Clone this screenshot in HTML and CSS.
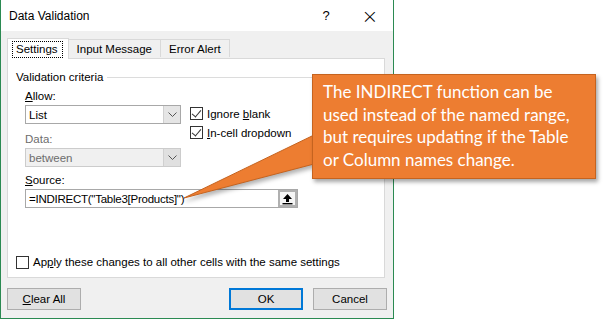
FILE: index.html
```html
<!DOCTYPE html>
<html lang="en">
<head>
    <meta charset="UTF-8">
    <title>Data Validation</title>
    <link rel="stylesheet" href="styles.css">
</head>
<body>
    <!-- Dialog -->
    <div class="dialog">
        <div class="titlebar">
            <span class="title">Data Validation</span>
            <span class="help">?</span>
            <span class="close">&times;</span>
        </div>

        <div class="dialog-body">
            <div class="tabs">
                <div class="tab active"><span class="focus">Settings</span></div>
                <div class="tab">Input Message</div>
                <div class="tab">Error Alert</div>
            </div>

            <div class="panel">
                <div class="group-title">
                    <span>Validation criteria</span>
                    <span class="group-line"></span>
                </div>

                <div class="criteria">
                    <div class="criteria-left">
                        <div class="label"><u>A</u>llow:</div>
                        <div class="select">
                            <span class="select-value">List</span>
                            <span class="select-btn"><svg width="9" height="6" viewBox="0 0 9 6"><path d="M0.5 0.5 L4.5 4.5 L8.5 0.5" fill="none" stroke="#555" stroke-width="1"/></svg></span>
                        </div>
                        <div class="label disabled">Data:</div>
                        <div class="select disabled">
                            <span class="select-value">between</span>
                            <span class="select-btn"><svg width="9" height="6" viewBox="0 0 9 6"><path d="M0.5 0.5 L4.5 4.5 L8.5 0.5" fill="none" stroke="#555" stroke-width="1"/></svg></span>
                        </div>
                    </div>
                    <div class="criteria-right">
                        <label class="check"><span class="box checked"></span><span>Ignore <u>b</u>lank</span></label>
                        <label class="check"><span class="box checked"></span><span><u>I</u>n-cell dropdown</span></label>
                    </div>
                </div>

                <div class="label source-label"><u>S</u>ource:</div>
                <div class="source">
                    <span class="source-value">=INDIRECT("Table3[Products]")</span>
                    <span class="source-btn"><svg width="11" height="12" viewBox="0 0 11 12"><path d="M5.5 1 L10 6 L7 6 L7 9 L4 9 L4 6 L1 6 Z" fill="#000"/><rect x="0.5" y="10" width="10" height="1.4" fill="#000"/></svg></span>
                </div>

                <label class="check apply"><span class="box"></span><span>Ap<u>p</u>ly these changes to all other cells with the same settings</span></label>
            </div>

            <div class="buttons">
                <button class="btn"><u>C</u>lear All</button>
                <span class="spacer"></span>
                <button class="btn default">OK</button>
                <button class="btn">Cancel</button>
            </div>
        </div>
    </div>

    <!-- Callout -->
    <svg class="callout-tail" width="140" height="80" viewBox="0 0 140 80">
        <polygon points="0,64 130,1 130,30" fill="#ed7d31" stroke="#c5631f" stroke-width="1"/>
    </svg>
    <div class="callout">
        The INDIRECT function can be used instead of the named range, but requires updating if the Table or Column names change.
    </div>
</body>
</html>
```

FILE: styles.css
```css
* {
    margin: 0;
    padding: 0;
    box-sizing: border-box;
}

body {
    background: #fff;
    font-family: "Segoe UI", "Liberation Sans", sans-serif;
    font-size: 11.5px;
    color: #000;
    position: relative;
    width: 604px;
    height: 320px;
    overflow: hidden;
}

u {
    text-decoration: underline;
    text-underline-offset: 1px;
}

/* Dialog */
.dialog {
    width: 394px;
    height: 319px;
    border: 1px solid #2b8a52;
    border-top: none;
    background: #f0f0f0;
    display: flex;
    flex-direction: column;
}

.titlebar {
    height: 31px;
    background: #fff;
    display: flex;
    align-items: center;
    padding-left: 8px;
    font-size: 12px;
}

.title {
    flex: 1;
}

.help {
    width: 20px;
    text-align: center;
    margin-right: 24px;
    font-size: 13px;
}

.close {
    width: 20px;
    text-align: center;
    margin-right: 13px;
    font-size: 20px;
    font-weight: 300;
    font-family: "DejaVu Sans", sans-serif;
    line-height: 1;
}

.dialog-body {
    padding: 7px 0 0 6px;
}

/* Tabs */
.tabs {
    display: flex;
    align-items: flex-end;
    height: 20px;
    position: relative;
    z-index: 1;
}

.tab {
    height: 18px;
    padding: 0 8px;
    border: 1px solid #d9d9d9;
    border-bottom: none;
    background: #f0f0f0;
    display: flex;
    align-items: center;
    margin-bottom: 1px;
}

.tab + .tab {
    margin-left: -1px;
}

.tab.active {
    height: 21px;
    background: #fff;
    padding: 0 6px 0 5px;
    margin-bottom: -1px;
}

.focus {
    outline: 1px dotted #000;
    padding: 0 4px 0 3px;
    line-height: 15px;
}

.panel {
    width: 378px;
    height: 220px;
    border: 1px solid #d9d9d9;
    background: #fff;
    padding: 10px 0 0 8px;
    display: flex;
    flex-direction: column;
}

.group-title {
    display: flex;
    align-items: center;
    height: 16px;
}

.group-line {
    flex: 1;
    height: 1px;
    background: #dcdcdc;
    margin-left: 4px;
}

.criteria {
    display: flex;
    padding-left: 9px;
    margin-top: 3px;
}

.criteria-left {
    width: 156px;
}

.label {
    height: 16px;
    line-height: 16px;
    margin-bottom: 1px;
}

.label.disabled {
    color: #6d6d6d;
    margin-top: 7px;
}

.select {
    width: 156px;
    height: 19px;
    border: 1px solid #a8a8a8;
    display: flex;
    align-items: center;
    background: #fff;
}

.select.disabled {
    background: #f0f0f0;
    border-color: #cccccc;
    color: #6d6d6d;
}

.select-value {
    flex: 1;
    padding-left: 3px;
}

.select-btn {
    width: 17px;
    height: 17px;
    background: #e5e5e5;
    border-left: 1px solid #d0d0d0;
    display: flex;
    align-items: center;
    justify-content: center;
}

.select.disabled .select-btn {
    background: #e0e0e0;
}

.criteria-right {
    padding-left: 9px;
    padding-top: 19px;
    display: flex;
    flex-direction: column;
    gap: 6px;
}

.check {
    display: flex;
    align-items: center;
    height: 13px;
    gap: 4px;
}

.box {
    width: 13px;
    height: 13px;
    border: 1px solid #333;
    background: #fff;
    position: relative;
    flex: none;
}

.box.checked::after {
    content: "";
    position: absolute;
    left: 3px;
    top: 0px;
    width: 4px;
    height: 8px;
    border-right: 1.3px solid #333;
    border-bottom: 1.3px solid #333;
    transform: rotate(40deg);
}

.source-label {
    margin-left: 9px;
    margin-top: 5px;
}

.source {
    margin-left: 9px;
    width: 273px;
    height: 19px;
    border: 1px solid #a8a8a8;
    display: flex;
    align-items: center;
}

.source-value {
    flex: 1;
    padding-left: 3px;
    letter-spacing: -0.25px;
}

.source-btn {
    width: 19px;
    height: 17px;
    border: 2px solid #b0b0b0;
    background: #f5f5f5;
    display: flex;
    align-items: center;
    justify-content: center;
}

.check.apply {
    margin-top: 47px;
    height: 14px;
}

/* Buttons */
.buttons {
    display: flex;
    margin-top: 10px;
    width: 380px;
}

.spacer {
    flex: 1;
}

.btn {
    width: 74px;
    height: 22px;
    font: inherit;
    background: #e1e1e1;
    border: 1px solid #adadad;
    color: #000;
}

.btn.default {
    border: 2px solid #0078d7;
    margin-right: 10px;
}

/* Callout */
.callout {
    position: absolute;
    left: 312px;
    top: 74px;
    width: 284px;
    height: 105px;
    background: #ed7d31;
    border: 1px solid #c5631f;
    box-shadow: 2px 3px 4px rgba(0, 0, 0, 0.35);
    color: #fff;
    font-family: Lato, "Liberation Sans", sans-serif;
    font-size: 17px;
    line-height: 22.7px;
    padding: 6px 8px 0 10px;
}

.callout-tail {
    position: absolute;
    left: 184px;
    top: 134px;
    filter: drop-shadow(2px 3px 2px rgba(0, 0, 0, 0.3));
}
```
